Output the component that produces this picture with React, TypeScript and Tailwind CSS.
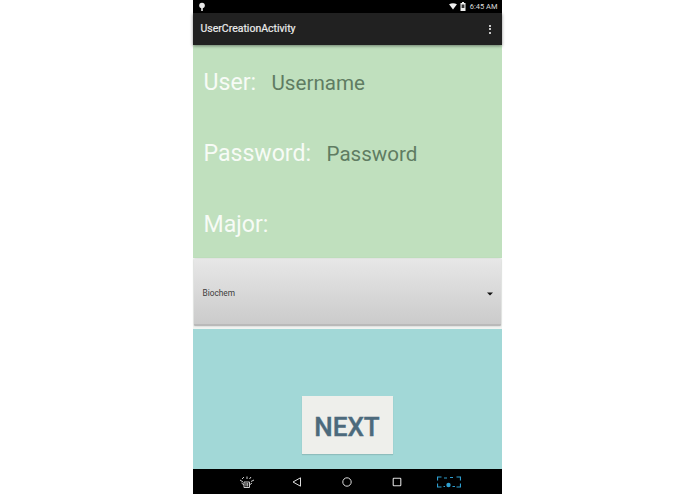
export default function App() {
  const font = { fontFamily: 'Roboto, sans-serif' };
  return (
    <div className="w-[695px] h-[494px] bg-white flex justify-center overflow-hidden font-['Roboto',sans-serif]" style={font}>
      <div className="w-[309px] h-[494px] ml-[-1px] flex flex-col bg-[#f4f6f4]">
        <div className="h-[13px] bg-black flex items-center justify-between pl-[5px] pr-[4px] shrink-0">
          <svg width="8" height="10" viewBox="0 0 8 10">
            <circle cx="4" cy="3.5" r="2.8" fill="#e8e8e8" />
            <rect x="3.2" y="5" width="1.6" height="4" fill="#e8e8e8" />
          </svg>
          <div className="flex items-center gap-[3px]">
            <svg width="8" height="7" viewBox="0 0 9 8">
              <path d="M0 1.5 Q4.5 -1 9 1.5 L4.5 7.5 Z" fill="#eee" />
            </svg>
            <svg width="6" height="9" viewBox="0 0 6 9">
              <path d="M2 0h2v1h1.5v8h-5V1H2z" fill="#eee" />
              <rect x="1.6" y="2.5" width="2.8" height="3.5" fill="#333" />
            </svg>
            <span className="text-[7.5px] leading-none text-[#dcdcdc] ml-[1px]">6:45 AM</span>
          </div>
        </div>
        <div className="h-[32px] bg-[#212121] flex items-center justify-between pl-[8px] pr-[11px] shrink-0 shadow-[0_1px_3px_rgba(0,0,0,0.45)] relative">
          <span className="text-[10.5px] text-[#ececec] leading-none mt-[1px] [-webkit-text-stroke:0.2px_#ececec]">UserCreationActivity</span>
          <div className="flex flex-col gap-[1.5px]">
            <div className="w-[2px] h-[2px] bg-white rounded-full" />
            <div className="w-[2px] h-[2px] bg-white rounded-full" />
            <div className="w-[2px] h-[2px] bg-white rounded-full" />
          </div>
        </div>
        <div className="h-[213px] bg-[#c0e0be] pl-[11px] shrink-0 flex flex-col">
          <div className="flex items-baseline h-[71px] pt-[24px]">
            <span className="text-[23.1px] leading-[28px] text-[#f7fbf6] w-[68px]">User:</span>
            <span className="text-[20.6px] leading-[28px] text-[#5f7c62]">Username</span>
          </div>
          <div className="flex items-baseline h-[71px] pt-[24px]">
            <span className="text-[23.1px] leading-[28px] text-[#f7fbf6] w-[123px]">Password:</span>
            <span className="text-[20.6px] leading-[28px] text-[#5f7c62]">Password</span>
          </div>
          <div className="flex items-baseline h-[71px] pt-[24px]">
            <span className="text-[23.1px] leading-[28px] text-[#f7fbf6]">Major:</span>
          </div>
        </div>
        <div className="h-[71px] px-[1px] pt-[1px] shrink-0 bg-[#f2f4f2]">
          <div className="h-[67px] rounded-[1px] flex items-center justify-between pl-[9px] pr-[9px] bg-gradient-to-b from-[#e7e7e7] to-[#cbcbcb] border-b-[2px] border-[#b9b9b9] shadow-[0_0_2px_rgba(0,0,0,0.25)]">
            <span className="text-[8.3px] leading-none text-[#3c3c3c] mt-[3px]">Biochem</span>
            <svg width="6" height="4" viewBox="0 0 6 4" className="mr-[-1px] mt-[4px]">
              <path d="M0 0.5h6L3 3.5z" fill="#111" />
            </svg>
          </div>
        </div>
        <div className="h-[140px] bg-[#a2d8d7] shrink-0 flex flex-col items-center justify-end pb-[15px]">
          <div className="w-[91px] h-[58px] bg-[#eeefeb] flex items-center justify-center shadow-[0_1px_1px_rgba(0,0,0,0.12)]">
            <span className="text-[26px] leading-none font-medium text-[#4c6a7c] mt-[3px] [-webkit-text-stroke:0.4px_#4c6a7c]">NEXT</span>
          </div>
        </div>
        <div className="h-[25px] bg-black flex items-center shrink-0 relative">
          <div className="flex items-center pl-[46px]">
            <svg width="16" height="12" viewBox="0 0 16 12" className="text-[#cfcfcf]">
              <g fill="none" stroke="currentColor" strokeWidth="1">
                <path d="M3 3 L5 1 M8 0.5 V3 M12 1 L10.5 3 M15 4 L12 5.5 M1 4 L4 6" />
                <path d="M5 6 H10.5 V11.5 H5 Z" />
                <path d="M7 7 V10.5 M8.7 7 V10.5" />
                <path d="M2.5 7 L5 9 M13 7 L10.5 9" />
              </g>
            </svg>
            <svg width="10" height="10" viewBox="0 0 10 10" className="ml-[37px]">
              <path d="M8.5 0.8 V9.2 L1 5 Z" fill="none" stroke="#ddd" strokeWidth="1" strokeLinejoin="round" />
            </svg>
            <svg width="10" height="10" viewBox="0 0 10 10" className="ml-[40px]">
              <circle cx="5" cy="5" r="4.2" fill="none" stroke="#ddd" strokeWidth="1" />
            </svg>
            <svg width="10" height="10" viewBox="0 0 10 10" className="ml-[40px]">
              <rect x="1.2" y="1.2" width="7.6" height="7.6" rx="0.7" fill="none" stroke="#ddd" strokeWidth="1.1" />
            </svg>
            <svg width="24" height="12" viewBox="0 0 24 12" className="ml-[35px]">
              <g fill="none" stroke="#2f9fd0" strokeWidth="1.2">
                <path d="M0.5 4.5 V1 H4.5 M19.5 1 H23.5 V4.5 M0.5 7.5 V11 H4.5 M19.5 11 H23.5 V7.5" />
                <path d="M7 2 H10 M13 1.5 H16 M6.5 10.5 H8 M15.5 10.5 H18" />
              </g>
              <circle cx="11.5" cy="9" r="2.2" fill="#2f9fd0" />
            </svg>
          </div>
        </div>
      </div>
    </div>
  );
}
